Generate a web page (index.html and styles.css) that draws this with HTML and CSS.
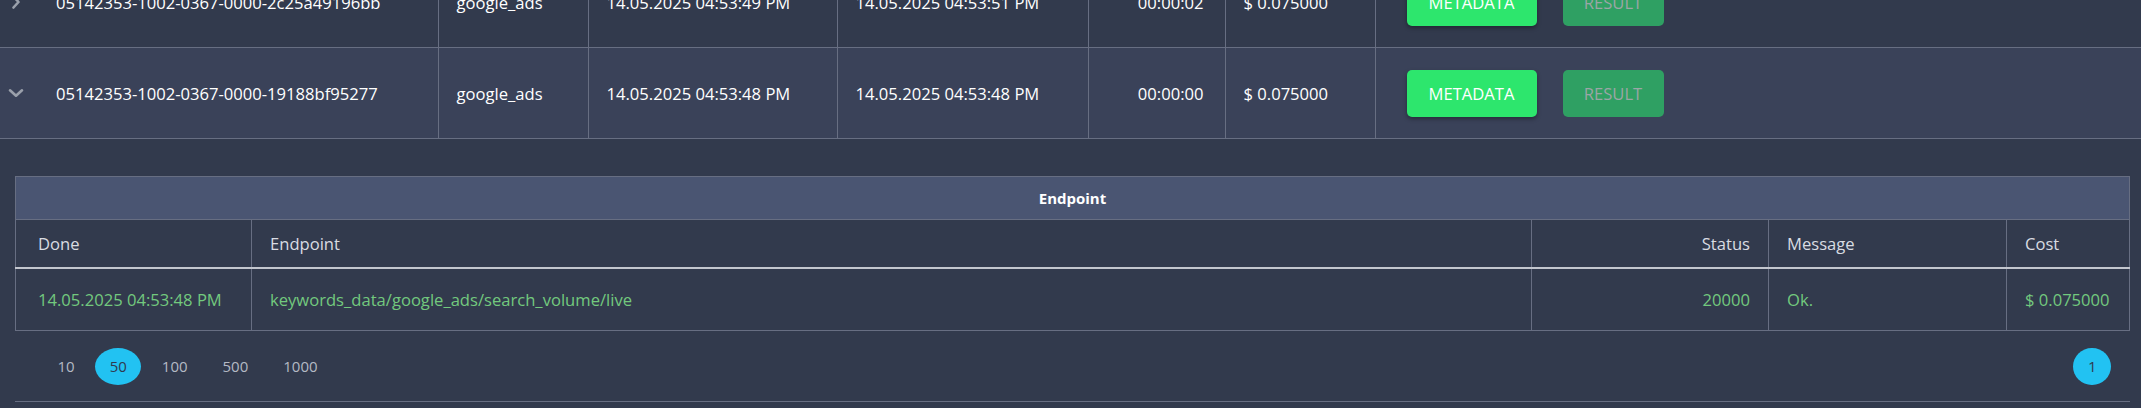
FILE: index.html
```html
<!DOCTYPE html>
<html lang="en">
<head>
<meta charset="utf-8">
<title>Tasks</title>
<link rel="stylesheet" href="styles.css">
</head>
<body>
<div class="page">
  <table class="jobs">
    <colgroup>
      <col class="c-id"><col class="c-se"><col class="c-dt"><col class="c-dt2"><col class="c-tm"><col class="c-cost"><col class="c-act">
    </colgroup>
    <tbody>
      <tr class="job">
        <td class="idcell">
          <div class="idwrap">
            <svg class="chev" width="16" height="16" viewBox="0 0 16 16"><path d="M5.5 2.5 L10.5 8 L5.5 13.5" fill="none" stroke="#9aa0ab" stroke-width="2.6" stroke-linecap="round" stroke-linejoin="round"/></svg>
            <span>05142353-1002-0367-0000-2c25a49196bb</span>
          </div>
        </td>
        <td>google_ads</td>
        <td>14.05.2025 04:53:49 PM</td>
        <td>14.05.2025 04:53:51 PM</td>
        <td class="num">00:00:02</td>
        <td>$ 0.075000</td>
        <td class="actions"><div class="btns"><button class="btn meta">METADATA</button><button class="btn res">RESULT</button></div></td>
      </tr>
      <tr class="job open">
        <td class="idcell">
          <div class="idwrap">
            <svg class="chev" width="16" height="16" viewBox="0 0 16 16"><path d="M2 5.3 L8 10.7 L14 5.3" fill="none" stroke="#9aa0ab" stroke-width="2.6" stroke-linecap="round" stroke-linejoin="round"/></svg>
            <span>05142353-1002-0367-0000-19188bf95277</span>
          </div>
        </td>
        <td>google_ads</td>
        <td>14.05.2025 04:53:48 PM</td>
        <td>14.05.2025 04:53:48 PM</td>
        <td class="num">00:00:00</td>
        <td>$ 0.075000</td>
        <td class="actions"><div class="btns"><button class="btn meta">METADATA</button><button class="btn res">RESULT</button></div></td>
      </tr>
      <tr class="detail">
        <td colspan="7">
          <div class="detail-box">
            <table class="ep">
              <colgroup><col class="e1"><col class="e2"><col class="e3"><col class="e4"><col class="e5"></colgroup>
              <thead>
                <tr class="ep-title"><th colspan="5">Endpoint</th></tr>
                <tr class="ep-head"><th>Done</th><th>Endpoint</th><th class="num">Status</th><th>Message</th><th>Cost</th></tr>
              </thead>
              <tbody>
                <tr class="ep-row"><td>14.05.2025 04:53:48 PM</td><td>keywords_data/google_ads/search_volume/live</td><td class="num">20000</td><td>Ok.</td><td>$ 0.075000</td></tr>
              </tbody>
            </table>
            <div class="pager">
              <div class="sizes">
                <span class="pg">10</span><span class="pg on">50</span><span class="pg">100</span><span class="pg">500</span><span class="pg">1000</span>
              </div>
              <div class="pages"><span class="pg on">1</span></div>
            </div>
          </div>
        </td>
      </tr>
    </tbody>
  </table>
</div>
</body>
</html>
```
FILE: styles.css
```css
html, body {
  margin: 0;
  padding: 0;
  background: #323a4d;
  overflow: hidden;
}
body {
  font-family: "Open Sans", "Noto Sans", sans-serif;
  font-size: 16.6px;
  color: #ffffff;
}
.page {
  margin-top: -43px;
}
.jobs {
  width: 100%;
  border-collapse: collapse;
  table-layout: fixed;
}
.c-id { width: 438px; }
.c-se { width: 150px; }
.c-dt { width: 249px; }
.c-dt2 { width: 251px; }
.c-tm { width: 137px; }
.c-cost { width: 150px; }
.job td {
  height: 90px;
  padding: 0 18px;
  border-left: 1px solid #676e82;
  border-bottom: 1px solid #676e82;
  vertical-align: middle;
  white-space: nowrap;
}
.job td:first-child { border-left: none; padding-left: 8px; }
.job.open { background: #3a4259; }
.job td.num { text-align: right; padding-right: 21px; }
.idwrap {
  display: flex;
  align-items: center;
  gap: 32px;
}
.chev { flex: none; }
.actions { padding-left: 31px !important; }
.btns {
  display: flex;
  gap: 26px;
}
.btn {
  font-family: inherit;
  font-size: 16.6px;
  height: 47px;
  border: none;
  border-radius: 5px;
  padding: 0 18px;
  cursor: pointer;
}
.btn.meta {
  background: #2de66d;
  color: #ffffff;
  width: 130px;
  box-shadow: 0 2px 4px rgba(0, 0, 0, 0.35);
}
.btn.res {
  background: #2fa063;
  color: #9ba6a6;
  width: 101px;
}
.detail td {
  padding: 0;
}
.detail-box {
  padding: 37px 11px 6px 15px;
}
.ep {
  width: 100%;
  border-collapse: collapse;
  table-layout: fixed;
  border: 1px solid #676e82;
}
.e1 { width: 236px; }
.e2 { width: 1280px; }
.e3 { width: 237px; }
.e4 { width: 238px; }
.ep th, .ep td {
  border: 1px solid #676e82;
  padding: 0 18px;
  text-align: left;
  white-space: nowrap;
}
.ep .num { text-align: right; }
.ep-title th {
  height: 42px;
  background: #4a5572;
  text-align: center;
  font-weight: 700;
  font-size: 15px;
  color: #ffffff;
}
.ep-head th {
  height: 47px;
  font-weight: 400;
  color: #d9dce2;
  border-bottom: 2px solid #c3c6ce;
}
.ep-head th:first-child, .ep-row td:first-child { padding-left: 22px; }
.ep-row td {
  height: 61px;
  color: #72c97e;
}
.pager {
  height: 70px;
  border-bottom: 1px solid #676e82;
  display: flex;
  align-items: center;
  justify-content: space-between;
  padding: 0 19px 0 28px;
}
.sizes, .pages {
  display: flex;
  gap: 6px;
}
.pg {
  height: 37px;
  line-height: 37px;
  padding: 0 14.5px;
  border-radius: 50%;
  font-size: 15px;
  color: #b4b9c4;
}
.pg.on {
  background: #22c2f2;
  color: #2f3a4f;
}
```
